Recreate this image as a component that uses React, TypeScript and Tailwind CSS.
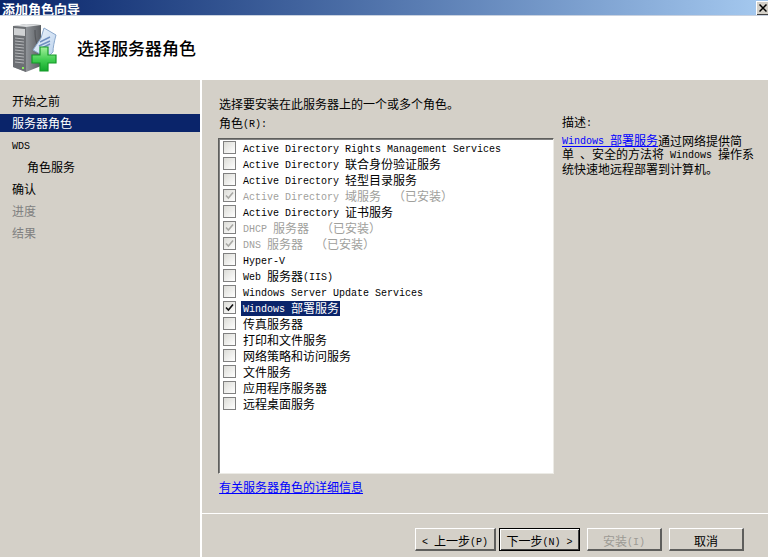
import React from "react";

const FONT = "font-['Noto_Sans_CJK_SC','Liberation_Mono',monospace]";

function T({ text, cls = "", big }: { text: string; cls?: string; big?: boolean }) {
  const parts = text.split(/([\x20-\x7e]+)/).filter(Boolean);
  return (
    <span className={cls}>
      {parts.map((p, i) =>
        /^[\x20-\x7e]+$/.test(p) ? (
          <span key={i} className="font-['Liberation_Mono',monospace] text-[10px] whitespace-pre align-[1px]">
            {p}
          </span>
        ) : (
          <span
            key={i}
            className={`font-['Noto_Sans_CJK_SC',sans-serif] ${big ? "text-[13px]" : "text-[12px]"}`}
          >
            {p}
          </span>
        )
      )}
    </span>
  );
}

function WizardIcon() {
  return (
    <svg width="48" height="52" viewBox="0 0 48 52">
      <defs>
        <linearGradient id="srv" x1="0" y1="0" x2="1" y2="0">
          <stop offset="0" stopColor="#a9acb0" />
          <stop offset="0.5" stopColor="#8d9196" />
          <stop offset="1" stopColor="#5a5d61" />
        </linearGradient>
        <linearGradient id="pl" x1="0" y1="0" x2="0" y2="1">
          <stop offset="0" stopColor="#a4f09c" />
          <stop offset="0.55" stopColor="#3fcc50" />
          <stop offset="1" stopColor="#12a82c" />
        </linearGradient>
        <linearGradient id="tag" x1="0" y1="0" x2="1" y2="1">
          <stop offset="0" stopColor="#f2f7fd" />
          <stop offset="1" stopColor="#b8d0ec" />
        </linearGradient>
      </defs>
      <path d="M2 4 L15 2 L30 3 L30 44 L15 50 L2 45 Z" fill="url(#srv)" />
      <path d="M2 4 L15 2 L30 3 L15 5 Z" fill="#dcdee0" />
      <path d="M2 4 L15 5 L15 50 L2 45 Z" fill="#6c6f73" />
      <path d="M3 6 L14 7 L14 14 L3 13 Z" fill="#d0d2d4" />
      <path d="M4 16 L13 17 M4 19 L13 20 M4 22 L13 23 M4 25 L13 26 M4 28 L13 29 M4 31 L13 32 M4 34 L13 35 M4 37 L13 38 M4 40 L13 41" stroke="#b4b6b9" strokeWidth="1" />
      <rect x="11" y="45" width="2" height="2" fill="#8af05a" />
      <path d="M24 8 Q24 24 30 26" fill="none" stroke="#55585c" strokeWidth="1.2" />
      <path d="M33 6 L45 13 Q42 24 42 30 L36 36 L22 28 L30 16 Z" fill="url(#tag)" stroke="#8ba8cc" strokeWidth="1" />
      <path d="M29 20 L39 15 M28 24 L39 19 M31 26 L39 22" stroke="#6f8fc0" strokeWidth="1.5" />
      <path d="M29 25 H37 V33 H45 V41 H37 V49 H29 V41 H21 V33 H29 Z" fill="url(#pl)" stroke="#149a28" strokeWidth="1.2" />
    </svg>
  );
}

type Row = { t: string; state?: "off" | "done" | "on" };
const rows: Row[] = [
  { t: "Active Directory Rights Management Services" },
  { t: "Active Directory 联合身份验证服务" },
  { t: "Active Directory 轻型目录服务" },
  { t: "Active Directory 域服务  （已安装）", state: "done" },
  { t: "Active Directory 证书服务" },
  { t: "DHCP 服务器  （已安装）", state: "done" },
  { t: "DNS 服务器  （已安装）", state: "done" },
  { t: "Hyper-V" },
  { t: "Web 服务器(IIS)" },
  { t: "Windows Server Update Services" },
  { t: "Windows 部署服务", state: "on" },
  { t: "传真服务器" },
  { t: "打印和文件服务" },
  { t: "网络策略和访问服务" },
  { t: "文件服务" },
  { t: "应用程序服务器" },
  { t: "远程桌面服务" },
];

function Check({ state }: { state?: Row["state"] }) {
  const checked = state === "done" || state === "on";
  return (
    <span className="w-[13px] h-[13px] shrink-0 border border-[#808080] bg-gradient-to-br from-[#dcdcd7] to-white flex items-center justify-center">
      {checked && (
        <svg width="9" height="9" viewBox="0 0 9 9">
          <path
            d="M1 4.5 L3.4 7 L8 1.5"
            fill="none"
            stroke={state === "done" ? "#a8a8a4" : "#111111"}
            strokeWidth="1.6"
          />
        </svg>
      )}
    </span>
  );
}

function Btn({
  children,
  def,
  disabled,
  wide,
}: {
  children: React.ReactNode;
  def?: boolean;
  disabled?: boolean;
  wide?: boolean;
}) {
  return (
    <div
      className={`h-[23px] ${wide ? "w-[81px]" : "w-[75px]"} flex items-center justify-center bg-[#d4d0c8] ${
        def
          ? "border border-black shadow-[inset_1px_1px_0_#ffffff,inset_-1px_-1px_0_#404040]"
          : "border-t border-l border-t-white border-l-white border-r-2 border-b-2 border-r-[#5e5e5c] border-b-[#5e5e5c]"
      } ${disabled ? "text-[#9c9a94]" : "text-black"}`}
    >
      {children}
    </div>
  );
}

export default function App() {
  return (
    <div className={`w-[768px] h-[557px] overflow-hidden bg-[#d4d0c8] flex flex-col leading-none text-black ${FONT}`}>
      {/* title bar */}
      <div className="h-[15px] shrink-0 bg-gradient-to-r from-[#0a246a] to-[#a6caf0] flex items-center justify-between">
        <T text="添加角色向导" big cls="pl-[2px] text-white font-bold leading-[15px]" />
        <div className="w-[12px] h-[14px] bg-[#d4d0c8] border-t border-l border-white flex items-center justify-center shadow-[inset_0_-1px_0_#404040]">
          <svg width="8" height="8" viewBox="0 0 8 8">
            <path d="M0.5 0.5 L7.5 7.5 M7.5 0.5 L0.5 7.5" stroke="#000" strokeWidth="1.5" />
          </svg>
        </div>
      </div>
      <div className="h-px shrink-0 bg-[#c9d2e0]" />
      {/* header */}
      <div className="h-[64px] shrink-0 bg-white flex items-center">
        <div className="ml-[11px] w-[48px]">
          <WizardIcon />
        </div>
        <span className="ml-[18px] -mt-[1px] font-['Noto_Sans_CJK_SC',sans-serif] text-[17px] font-medium">选择服务器角色</span>
      </div>
      {/* body */}
      <div className="flex-1 flex min-h-0">
        {/* sidebar */}
        <div className="w-[200px] shrink-0 pt-[12px] text-[12px]">
          <div className="h-[18px] pl-[12px] flex items-center"><T text="开始之前" /></div>
          <div className="h-[18px] mt-[4px] pl-[12px] flex items-center bg-[#0a246a] text-white"><T text="服务器角色" /></div>
          <div className="h-[18px] mt-[4px] pl-[12px] flex items-center"><T text="WDS" /></div>
          <div className="h-[18px] mt-[4px] pl-[27px] flex items-center"><T text="角色服务" /></div>
          <div className="h-[18px] mt-[4px] pl-[12px] flex items-center"><T text="确认" /></div>
          <div className="h-[18px] mt-[4px] pl-[12px] flex items-center text-[#808080]"><T text="进度" /></div>
          <div className="h-[18px] mt-[4px] pl-[12px] flex items-center text-[#808080]"><T text="结果" /></div>
        </div>
        <div className="w-[2px] shrink-0 bg-white" />
        {/* main */}
        <div className="flex-1 flex flex-col min-w-0">
          <div className="h-[433px] shrink-0 pl-[17px] pt-[15px] flex flex-col">
            <div className="h-[14px] flex items-center"><T text="选择要安装在此服务器上的一个或多个角色。" /></div>
            <div className="flex mt-[5px]">
              <div className="w-[335px] shrink-0">
                <div className="h-[14px] flex items-center"><T text="角色(R):" /></div>
                <div className="mt-[10px] -ml-[1px] w-[336px] h-[336px] bg-white border border-t-[#5e5e5c] border-l-[#5e5e5c] border-r-[#ecebe6] border-b-[#ecebe6] shadow-[inset_1px_1px_0_#808080] pl-[4px]">
                  {rows.map((r) => (
                    <div key={r.t} className="h-[16px] flex items-center">
                      <Check state={r.state} />
                      <span
                        className={`ml-[5px] mt-[3px] h-[15px] pl-[2px] pb-[5px] flex items-center whitespace-pre ${
                          r.state === "on"
                            ? "bg-[#0a246a] text-white pr-[1px]"
                            : r.state === "done"
                            ? "text-[#a0a09c]"
                            : ""
                        }`}
                      >
                        <T text={r.t} />
                      </span>
                    </div>
                  ))}
                </div>
                <div className="mt-[4px] h-[14px] flex items-center text-[#0000ff] underline"><T text="有关服务器角色的详细信息" /></div>
              </div>
              <div className="ml-[8px] w-[190px] -mt-[1px]">
                <div className="h-[14px] flex items-center"><T text="描述:" /></div>
                <div className="mt-[6px] leading-[14px] whitespace-nowrap">
                  <div className="h-[14px] flex items-center">
                    <T text="Windows 部署服务" cls="text-[#0000ff] underline" />
                    <T text="通过网络提供简" />
                  </div>
                  <div className="h-[14px] flex items-center"><T text="单 、安全的方法将 Windows 操作系" /></div>
                  <div className="h-[14px] flex items-center"><T text="统快速地远程部署到计算机。" /></div>
                </div>
              </div>
            </div>
          </div>
          <div className="h-px bg-white shrink-0" />
          <div className="flex-1 flex justify-end items-start pt-[14px] pr-[24px]">
            <Btn wide><T text="< 上一步(P)" /></Btn>
            <div className="ml-[3px]"><Btn wide def><T text="下一步(N) >" /></Btn></div>
            <div className="ml-[7px]"><Btn disabled><T text="安装(I)" /></Btn></div>
            <div className="ml-[7px]"><Btn><T text="取消" /></Btn></div>
          </div>
        </div>
      </div>
    </div>
  );
}
